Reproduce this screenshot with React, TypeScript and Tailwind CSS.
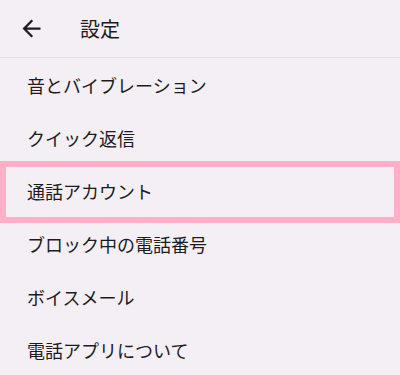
const items = [
  "音とバイブレーション",
  "クイック返信",
  "通話アカウント",
  "ブロック中の電話番号",
  "ボイスメール",
  "電話アプリについて",
];

export default function App() {
  return (
    <div
      className="h-[375px] w-[400px] overflow-hidden bg-[#f4eff4] text-[#1d1b20]"
      style={{ fontFamily: '"Noto Sans CJK JP", "Noto Sans", sans-serif' }}
    >
      <div className="flex h-[58px] items-center border-b border-[#e2dde2]">
        <div className="flex w-[62px] justify-center">
          <svg width="27" height="27" viewBox="0 0 24 24" fill="currentColor">
            <path d="M20 11H7.83l5.59-5.59L12 4l-8 8 8 8 1.41-1.41L7.83 13H20v-2z" />
          </svg>
        </div>
        <span className="ml-[18px] text-[20px] leading-none">設定</span>
      </div>
      <div className="flex flex-col">
        {items.map((label, i) => (
          <div key={label} className="relative flex h-[53px] items-center pl-[27px]">
            {i === 2 && (
              <div className="absolute left-0 right-0 top-[-3px] h-[62px] border-[6px] border-[#ffafc8]" />
            )}
            <span className="relative text-[18px] leading-none">{label}</span>
          </div>
        ))}
      </div>
    </div>
  );
}
